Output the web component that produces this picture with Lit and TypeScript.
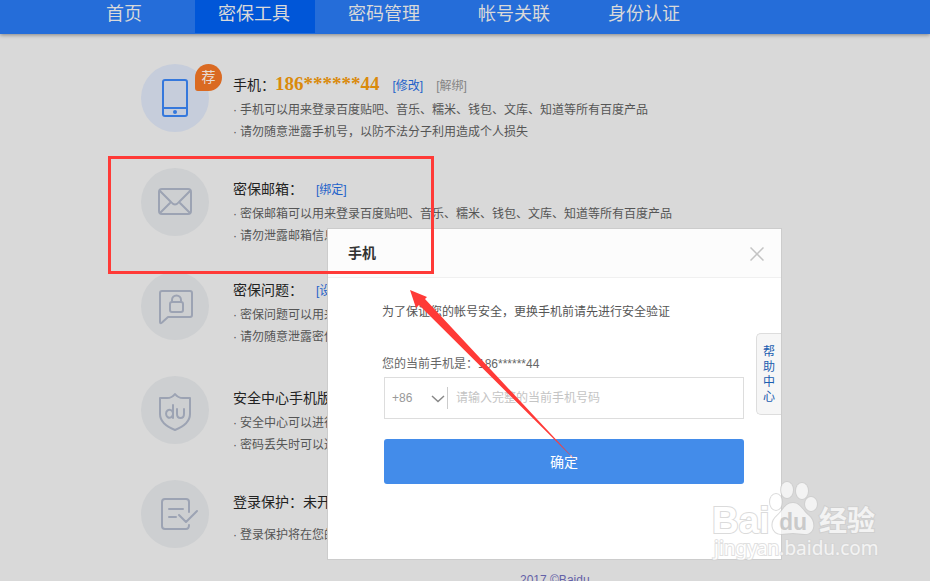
import { LitElement, html, svg, css, nothing, TemplateResult } from "lit";
import { customElement, state } from "lit/decorators.js";
import { classMap } from "lit/directives/class-map.js";

interface Tool {
  title: string;
  icon: TemplateResult;
  value?: string;
  links: { label: string; muted?: boolean }[];
  notes: string[];
  kind: "plain" | "tight" | "roomy" | "single";
  recommended?: boolean;
}

const phoneIcon = svg`
  <rect x="22" y="16" width="24" height="36" rx="2"></rect>
  <path d="M22 44H46"></path>
  <circle class="solid" cx="34" cy="48" r="2"></circle>`;
const mailIcon = svg`
  <rect x="18" y="21" width="32" height="25" rx="3"></rect>
  <path d="M19 23L30 34Q34 39 38 34L49 23M19 45L29 35M49 45L39 35"></path>`;
const questionIcon = svg`
  <path d="M21 19H49Q51 19 51 21V43Q51 45 49 45H27L21 50.500Q19 52 19 50V21Q19 19 21 19Z"></path>
  <rect x="29" y="30" width="13" height="10" rx="2"></rect>
  <path d="M31 30V28A4 4 0 0 1 40 28V30"></path>`;
const shieldIcon = svg`
  <path d="M34 18Q31 22 26 22H19V38Q19 48 34 54Q49 48 49 38V22H42Q37 22 34 18Z"></path>
  <path d="M32 29V42M32 38.500A3.500 4 0 1 1 32 37M36 33V38Q36 42 39.500 42Q43 42 43 38V33"></path>`;
const protectIcon = svg`
  <path d="M48 32V22Q48 19 45 19H24Q21 19 21 22V46Q21 49 24 49H45Q48 49 48 45"></path>
  <path d="M28 29H42M28 37H35M38 35L45 42L56 31"></path>`;

const TOOLS: Tool[] = [
  {
    title: "手机：",
    icon: phoneIcon,
    value: "186******44",
    links: [{ label: "[修改]" }, { label: "[解绑]", muted: true }],
    notes: [
      "手机可以用来登录百度贴吧、音乐、糯米、钱包、文库、知道等所有百度产品",
      "请勿随意泄露手机号，以防不法分子利用造成个人损失",
    ],
    kind: "plain",
    recommended: true,
  },
  {
    title: "密保邮箱：",
    icon: mailIcon,
    links: [{ label: "[绑定]" }],
    notes: [
      "密保邮箱可以用来登录百度贴吧、音乐、糯米、钱包、文库、知道等所有百度产品",
      "请勿泄露邮箱信息",
    ],
    kind: "plain",
  },
  {
    title: "密保问题：",
    icon: questionIcon,
    links: [{ label: "[设置]" }],
    notes: ["密保问题可以用来", "请勿随意泄露密保"],
    kind: "tight",
  },
  {
    title: "安全中心手机版",
    icon: shieldIcon,
    links: [],
    notes: ["安全中心可以进行", "密码丢失时可以通"],
    kind: "roomy",
  },
  {
    title: "登录保护：未开启",
    icon: protectIcon,
    links: [],
    notes: ["登录保护将在您的"],
    kind: "single",
  },
];

@customElement("top-nav")
export class TopNav extends LitElement {
  @state() private current = 1;

  static styles = css`
    :host {
      display: block;
      height: 34px;
      background: #256dd9;
      box-shadow: 0 1px 4px rgba(0, 0, 0, 0.4);
    }
    nav {
      display: flex;
      gap: 10px;
      padding-left: 65px;
    }
    a {
      width: 120px;
      height: 33px;
      box-sizing: border-box;
      padding: 0 2px 5px 0;
      line-height: 28px;
      text-align: center;
      font-size: 18px;
      color: #d9d9d9;
      text-decoration: none;
    }
    .active {
      background: #0056d8;
    }
  `;

  render() {
    return html`<nav>
      ${["首页", "密保工具", "密码管理", "帐号关联", "身份认证"].map(
        (name, i) => html`<a
          href="#"
          class=${classMap({ active: i === this.current })}
          @click=${(e: Event) => {
            e.preventDefault();
            this.current = i;
          }}
          >${name}</a
        >`
      )}
    </nav>`;
  }
}

@customElement("tool-list")
export class ToolList extends LitElement {
  static styles = css`
    :host {
      display: block;
    }
    ul {
      margin: 0;
      padding: 0;
      list-style: none;
    }
    .tools {
      display: grid;
      grid-auto-rows: minmax(88px, auto);
      gap: 16px;
    }
    .tool {
      display: flex;
      gap: 24px;
    }
    .disc {
      position: relative;
      flex: none;
      width: 68px;
      height: 68px;
      border-radius: 50%;
      background: #cdcfd1;
      color: #9ca3b3;
    }
    .disc.on {
      background: #c6cddb;
      color: #3578dc;
    }
    .disc svg {
      display: block;
      fill: none;
      stroke: currentColor;
      stroke-width: 2;
      stroke-linecap: round;
      stroke-linejoin: round;
    }
    .disc svg .solid {
      fill: currentColor;
      stroke: none;
    }
    .badge {
      position: absolute;
      top: 0;
      right: -13px;
      width: 27px;
      height: 27px;
      border-radius: 14px 14px 14px 3px;
      background: #da6a22;
      color: #e8dcd4;
      font-size: 14px;
      line-height: 27px;
      text-align: center;
    }
    .text {
      padding-top: 9px;
      white-space: nowrap;
    }
    .tight .text {
      padding-top: 6px;
    }
    .roomy .text,
    .single .text {
      padding-top: 10px;
    }
    h2 {
      display: flex;
      align-items: center;
      height: 22px;
      margin: 0;
      font-size: 14px;
      font-weight: 400;
      color: #222;
    }
    .value {
      font: 700 19px/22px "Liberation Serif", serif;
      color: #da8a0c;
    }
    h2 a {
      margin-left: 13px;
      font-size: 12px;
      color: #1f62c9;
      text-decoration: none;
    }
    h2 .muted {
      color: #858585;
    }
    .notes {
      margin-top: 4px;
      font-size: 12px;
      line-height: 22px;
      color: #555;
    }
    .single .notes {
      margin-top: 12px;
    }
    .notes li {
      display: flex;
    }
    .notes li::before {
      content: "·";
      width: 7px;
    }
  `;

  render() {
    return html`<ul class="tools">
      ${TOOLS.map(
        (t) => html`<li class="tool ${t.kind}">
          <div class=${classMap({ disc: true, on: !!t.recommended })}>
            <svg width="68" height="68" viewBox="0 0 68 68" aria-hidden="true">${t.icon}</svg>
            ${t.recommended ? html`<span class="badge">荐</span>` : nothing}
          </div>
          <div class="text">
            <h2>
              <span>${t.title}</span>
              ${t.value ? html`<span class="value">${t.value}</span>` : nothing}
              ${t.links.map(
                (l) => html`<a href="#" class=${classMap({ muted: !!l.muted })}>${l.label}</a>`
              )}
            </h2>
            <ul class="notes">
              ${t.notes.map((n) => html`<li>${n}</li>`)}
            </ul>
          </div>
        </li>`
      )}
    </ul>`;
  }
}

@customElement("verify-dialog")
export class VerifyDialog extends LitElement {
  static styles = css`
    :host {
      display: block;
      box-sizing: border-box;
      border: 1px solid #ccc;
      background: #fff;
      color: #555;
      font-size: 12px;
    }
    header {
      display: flex;
      align-items: center;
      justify-content: space-between;
      height: 48px;
      padding: 0 17px 0 20px;
      background: #fcfcfc;
      border-bottom: 1px solid #f0f0f0;
    }
    h1 {
      margin: 0;
      font-size: 14px;
      line-height: 22px;
      color: #333;
    }
    button {
      font: inherit;
      border: 0;
      padding: 0;
      cursor: pointer;
    }
    .close {
      padding-top: 2px;
      background: none;
    }
    svg {
      display: block;
      fill: none;
    }
    .close svg {
      stroke: #c4c4c4;
      stroke-width: 1.5;
    }
    form {
      padding: 23px 37px 75px 54px;
    }
    p {
      margin: 0;
      line-height: 22px;
    }
    .current {
      margin-top: 30px;
      color: #666;
    }
    .field,
    .submit {
      box-sizing: border-box;
      width: calc(100% - 2px);
      margin-left: 2px;
    }
    .field {
      display: flex;
      align-items: center;
      height: 42px;
      margin-top: 2px;
      border: 1px solid #ddd;
    }
    .code {
      position: relative;
      width: 62px;
      border-right: 1px solid #ccc;
    }
    .code svg {
      position: absolute;
      top: 8px;
      right: 2px;
      stroke: #888;
      stroke-width: 1.5;
      pointer-events: none;
    }
    select {
      display: block;
      appearance: none;
      width: 100%;
      height: 22px;
      padding: 0 0 0 7px;
      border: 0;
      background: none;
      font: inherit;
      color: #999;
    }
    input {
      flex: 1;
      min-width: 0;
      height: 22px;
      padding: 0 8px;
      border: 0;
      outline: 0;
      background: none;
      font: inherit;
      color: #555;
    }
    input::placeholder {
      color: #c4c4c4;
      opacity: 1;
    }
    .submit {
      display: block;
      height: 45px;
      margin-top: 20px;
      padding-bottom: 2px;
      border-radius: 3px;
      background: #438cea;
      color: #fff;
      font-size: 14px;
    }
    .help {
      position: absolute;
      top: 104px;
      right: 0;
      box-sizing: border-box;
      width: 25px;
      height: 82px;
      padding: 2px 6px 0 6px;
      border: 1px solid #ddd;
      border-right: 0;
      border-radius: 5px 0 0 5px;
      background: #f6f6f6;
      color: #1b5eb0;
      font-size: 12px;
      line-height: 15px;
    }
  `;

  render() {
    return html`
      <header>
        <h1>手机</h1>
        <button class="close" type="button" aria-label="关闭">
          <svg width="14" height="14" viewBox="0 0 14 14"><path d="M0.500 0.500L13.500 13.500M13.500 0.500L0.500 13.500"></path></svg>
        </button>
      </header>
      <form @submit=${(e: Event) => e.preventDefault()}>
        <p>为了保证您的帐号安全，更换手机前请先进行安全验证</p>
        <p class="current"><label for="phone">您的当前手机是：186******44</label></p>
        <div class="field">
          <div class="code">
            <select aria-label="国家代码"><option>+86</option></select>
            <svg width="14" height="8" viewBox="0 0 14 8"><path d="M1 1L7 6.500L13 1"></path></svg>
          </div>
          <input id="phone" type="tel" placeholder="请输入完整的当前手机号码" />
        </div>
        <button class="submit" type="submit">确定</button>
      </form>
      <button class="help" type="button">帮助中心</button>
    `;
  }
}

@customElement("app-root")
export class AppRoot extends LitElement {
  static styles = css`
    :host {
      display: block;
      position: relative;
      height: 100vh;
      overflow: hidden;
      background: #d9d9d9;
      font-family: "Liberation Sans", "Noto Sans CJK SC", sans-serif;
    }
    main {
      padding: 30px 0 0 141px;
    }
    footer {
      padding: 4px 0 0 520px;
      font-size: 12px;
      line-height: 16px;
    }
    footer a {
      color: #6461a8;
      text-decoration: none;
    }
    verify-dialog {
      position: absolute;
      top: 228px;
      left: 327px;
      width: 455px;
    }
    .frame {
      position: absolute;
      top: 156px;
      left: 108px;
      box-sizing: border-box;
      width: 326px;
      height: 118px;
      border: 3px solid #ff3a37;
      pointer-events: none;
    }
    .arrow {
      position: absolute;
      top: 290px;
      left: 410px;
      fill: #ff3a37;
      pointer-events: none;
    }
    .mark {
      position: absolute;
      top: 476px;
      left: 706px;
      opacity: 0.7;
      fill: #fff;
      stroke: #ccc;
      stroke-width: 2;
      paint-order: stroke;
      pointer-events: none;
    }
    .brand {
      font-size: 37px;
      font-weight: 700;
    }
    .du {
      font-size: 23px;
      font-weight: 700;
      fill: #c4c4c4;
      stroke: none;
    }
    .cjk {
      font-size: 28px;
      font-weight: 700;
    }
    .site {
      font-family: "Noto Sans", sans-serif;
      font-size: 19px;
      stroke: #d4d4d4;
    }
  `;

  render() {
    return html`
      <top-nav></top-nav>
      <main><tool-list></tool-list></main>
      <footer><a href="#">2017 ©Baidu</a></footer>
      <verify-dialog role="dialog"></verify-dialog>
      <div class="frame"></div>
      <svg class="arrow" width="168" height="174" viewBox="0 0 168 174" aria-hidden="true">
        <path d="M0 0L17 7L15 9L167 172L9 15L6 18Z"></path>
      </svg>
      <svg class="mark" width="180" height="90" viewBox="0 0 180 90">
        <text class="brand" x="6" y="57">Bai</text>
        <ellipse cx="70" cy="26" rx="6" ry="8"></ellipse>
        <ellipse cx="81" cy="14" rx="6" ry="8"></ellipse>
        <ellipse cx="96" cy="15" rx="6" ry="8"></ellipse>
        <ellipse cx="105" cy="28" rx="6" ry="7"></ellipse>
        <path d="M87 27C94 27 97 35 102 39C110 45 109 58 99 58C94 58 91 57 87 57C82 57 79 58 75 58C65 57 64 46 71 40C77 35 79 27 87 27Z"></path>
        <text class="du" x="73" y="54">du</text>
        <text class="cjk" x="113" y="55">经验</text>
        <text class="site" x="8" y="79">jingyan.baidu.com</text>
      </svg>
    `;
  }
}
